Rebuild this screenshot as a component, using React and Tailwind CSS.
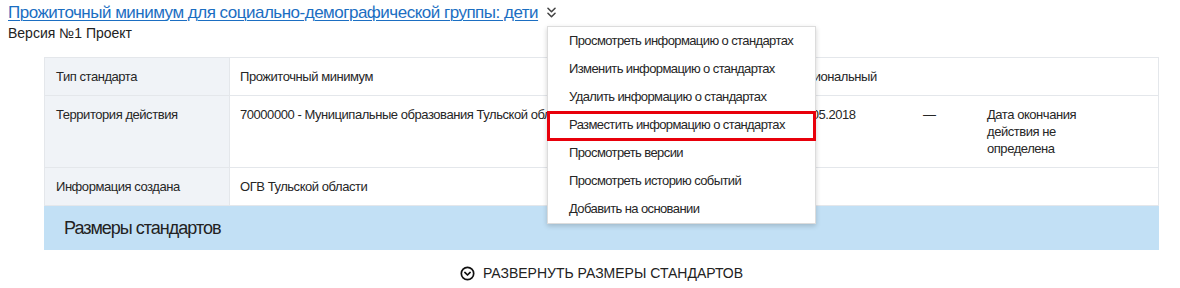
import React from "react";
import { ChevronsDown } from "lucide-react";

function CircleChevron() {
  return (
    <svg width="15" height="15" viewBox="0 0 16 16" fill="none">
      <circle cx="8" cy="8" r="6.6" stroke="#111" strokeWidth="1.8" />
      <path d="M5.2 6.9 L8 9.6 L10.8 6.9" stroke="#111" strokeWidth="1.8" strokeLinecap="round" strokeLinejoin="round" />
    </svg>
  );
}

const menuItems = [
  "Просмотреть информацию о стандартах",
  "Изменить информацию о стандартах",
  "Удалить информацию о стандартах",
  "Разместить информацию о стандартах",
  "Просмотреть версии",
  "Просмотреть историю событий",
  "Добавить на основании",
];

export default function App() {
  return (
    <div className="relative w-[1180px] h-[288px] bg-white overflow-hidden font-['Liberation_Sans',Arial,sans-serif] text-[#222]">
      <div className="pl-[8px]">
        <div className="flex items-center h-[24px] pt-[1px]">
          <a className="text-[17px] leading-[20px] tracking-[-0.5px] text-[#1b6ec2] underline underline-offset-[2px] decoration-[1px]">
            Прожиточный минимум для социально-демографической группы: дети
          </a>
          <ChevronsDown className="ml-[5px] text-[#444]" size={17} strokeWidth={2.2} />
        </div>
        <div className="text-[14px] leading-[17px] mt-[1px]">Версия №1 Проект</div>
      </div>

      <div className="ml-[44px] w-[1115px] mt-[15px]">
        <div className="border border-[#e4e7eb] text-[13px] leading-[17px] tracking-[-0.45px] text-[#262626]">
          <div className="grid grid-cols-[185px_565px_128px_64px_1fr] border-b border-[#e4e7eb]">
            <div className="bg-[#f0f3f7] border-r border-[#e4e7eb] px-[11px] py-[10px]">Тип стандарта</div>
            <div className="px-[10px] py-[10px]">Прожиточный минимум</div>
            <div className="py-[10px] col-span-3 whitespace-nowrap">Региональный</div>
          </div>
          <div className="grid grid-cols-[185px_565px_128px_64px_1fr] border-b border-[#e4e7eb]">
            <div className="bg-[#f0f3f7] border-r border-[#e4e7eb] px-[11px] py-[10px]">Территория действия</div>
            <div className="px-[10px] py-[10px] whitespace-nowrap overflow-hidden">70000000 - Муниципальные образования Тульской области</div>
            <div className="py-[10px]">01.05.2018</div>
            <div className="py-[10px]">—</div>
            <div className="py-[10px] w-[100px]">Дата окончания действия не определена</div>
          </div>
          <div className="grid grid-cols-[185px_1fr]">
            <div className="bg-[#f0f3f7] border-r border-[#e4e7eb] px-[11px] py-[10px]">Информация создана</div>
            <div className="px-[10px] py-[10px]">ОГВ Тульской области</div>
          </div>
        </div>
        <div className="h-[44px] bg-[#c2e0f5] flex items-center pl-[20px] text-[18px] tracking-[-1px] text-[#222]">
          Размеры стандартов
        </div>
        <div className="flex items-center justify-center gap-[8px] mt-[13px] text-[14px] text-[#222]">
          <CircleChevron />
          <span>РАЗВЕРНУТЬ РАЗМЕРЫ СТАНДАРТОВ</span>
        </div>
      </div>

      <div className="absolute left-[547px] top-[26px] w-[269px] bg-white border border-[#dcdcdc] shadow-[0_2px_5px_rgba(0,0,0,0.18)] text-[13px] tracking-[-0.6px] text-[#262626]">
        {menuItems.map((t, i) => (
          <div
            key={t}
            className={
              i === 3
                ? "relative h-[28px] flex items-center pl-[21px] whitespace-nowrap"
                : "h-[28px] flex items-center pl-[21px] whitespace-nowrap"
            }
          >
            {t}
            {i === 3 && (
              <div className="absolute left-[-1px] right-[-1px] top-[0px] bottom-[-2px] border-[3px] border-[#e8000b]" />
            )}
          </div>
        ))}
      </div>
    </div>
  );
}
